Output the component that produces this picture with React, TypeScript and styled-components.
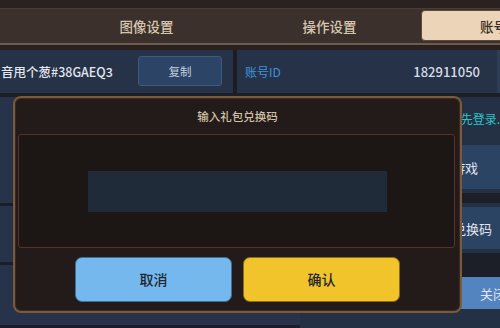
import styled, { createGlobalStyle } from "styled-components";

const GlobalStyle = createGlobalStyle`
    html, body {
        margin: 0;
        padding: 0;
        background: #243044;
    }
    body {
        font-family: "Noto Sans CJK SC", "Noto Sans", sans-serif;
    }
`;

const Screen = styled.div`
    position: relative;
    width: 500px;
    height: 328px;
    overflow: hidden;
    background: #243044;
    display: flex;
    flex-direction: column;
`;

const TopStrip = styled.div`
    height: 8px;
    background: #2a2220;
`;

const TabBar = styled.div`
    height: 34px;
    display: flex;
    align-items: center;
    padding-left: 55px;
    background: #3b302b;
    border-top: 1px solid #4a3c35;
    border-bottom: 2px solid #6b5b50;
`;

const Tab = styled.div<{ $active?: boolean }>`
    flex: 0 0 183px;
    height: ${(p) => (p.$active ? "31px" : "34px")};
    display: flex;
    align-items: center;
    justify-content: ${(p) => (p.$active ? "flex-start" : "center")};
    padding-left: ${(p) => (p.$active ? "58px" : "0")};
    box-sizing: border-box;
    font-size: 13.5px;
    font-weight: 500;
    color: ${(p) => (p.$active ? "#3a2d25" : "#d6c5ae")};
    background: ${(p) => (p.$active ? "#ecd4b8" : "transparent")};
    border: ${(p) => (p.$active ? "1px solid #5a4a3e" : "none")};
    border-radius: 4px;
`;

const TabShadow = styled.div`
    height: 5px;
    background: #2a201d;
`;

const InfoRow = styled.div`
    height: 44px;
    display: flex;
    border-bottom: 4px solid #1c1f27;
`;

const Cell = styled.div<{ $w: number }>`
    flex: 0 0 ${(p) => p.$w}px;
    display: flex;
    align-items: center;
    box-sizing: border-box;
    background: #253247;
`;

const NameText = styled.span`
    flex: 1;
    padding-left: 1px;
    font-size: 12.5px;
    font-weight: 500;
    color: #e3e7ee;
    white-space: nowrap;
`;

const CopyButton = styled.div`
    width: 84px;
    height: 30px;
    margin-right: 11px;
    display: flex;
    align-items: center;
    justify-content: center;
    font-size: 11.5px;
    color: #c4cfdc;
    background: #2c4566;
    border: 1px solid #3c5a7e;
    border-radius: 3px;
    box-sizing: border-box;
`;

const Divider = styled.div`
    flex: 0 0 4px;
    background: #1a1d24;
`;

const IdLabel = styled.span`
    flex: 1;
    padding-left: 8px;
    font-size: 12px;
    color: #3d93dc;
`;

const IdValue = styled.span`
    padding-right: 17px;
    font-size: 13px;
    font-weight: 500;
    color: #d6dce5;
`;

const EdgeStrip = styled.div`
    flex: 1;
    background: #2f3d54;
`;

const Body = styled.div`
    flex: 1;
    display: flex;
`;

const LeftColumn = styled.div`
    flex: 0 0 300px;
    display: flex;
    flex-direction: column;
`;

const LeftBlock = styled.div<{ $h: number }>`
    height: ${(p) => p.$h}px;
    background: #26334a;
    border-bottom: 3px solid #1b1e26;
`;

const RightColumn = styled.div`
    flex: 1;
    display: flex;
    flex-direction: column;
`;

const Notice = styled.div`
    height: 42px;
    display: flex;
    align-items: center;
    justify-content: flex-end;
    padding-right: 0;
    font-size: 12px;
    color: #2fc2c4;
    white-space: nowrap;
`;

const SideButton = styled.div<{ $h: number; $bg: string; $pad: string; $gap: number }>`
    height: ${(p) => p.$h}px;
    margin-top: ${(p) => p.$gap}px;
    display: flex;
    align-items: center;
    justify-content: flex-end;
    padding: ${(p) => p.$pad};
    font-size: 13px;
    color: #e1e7ef;
    background: ${(p) => p.$bg};
    white-space: nowrap;
    overflow: hidden;
`;

const Sep = styled.div<{ $h: number }>`
    height: ${(p) => p.$h}px;
    margin-top: 4px;
    background: #1c1f27;
`;

const Modal = styled.div`
    position: absolute;
    left: 13px;
    top: 96px;
    width: 449px;
    height: 217px;
    box-sizing: border-box;
    display: flex;
    flex-direction: column;
    background: #221b1a;
    border: 2px solid #7a5a38;
    border-radius: 8px;
    box-shadow: inset 0 0 0 1px #3a2a22;
`;

const ModalTitle = styled.div`
    height: 36px;
    display: flex;
    align-items: center;
    justify-content: center;
    font-size: 11.5px;
    font-weight: 500;
    color: #d2c0a8;
`;

const InputBox = styled.div`
    height: 112px;
    margin: 0 5px 0 3px;
    display: flex;
    align-items: center;
    justify-content: center;
    background: #1c1615;
    border: 1px solid #5a3028;
    border-radius: 3px;
`;

const CodeInput = styled.div`
    width: 299px;
    height: 41px;
    margin-left: 1px;
    background: #1f2b39;
`;

const ButtonRow = styled.div`
    flex: 1;
    display: flex;
    align-items: center;
    justify-content: center;
    gap: 11px;
    padding-bottom: 1px;
`;

const ActionButton = styled.div<{ $bg: string; $edge: string }>`
    width: 157px;
    height: 45px;
    box-sizing: border-box;
    display: flex;
    align-items: center;
    justify-content: center;
    font-size: 14px;
    font-weight: 500;
    color: #1e2630;
    background: ${(p) => p.$bg};
    border: 1px solid ${(p) => p.$edge};
    border-radius: 7px;
`;

function App() {
    return (
        <>
            <GlobalStyle />
            <Screen>
                <TopStrip />
                <TabBar>
                    <Tab>图像设置</Tab>
                    <Tab>操作设置</Tab>
                    <Tab $active>账号设置</Tab>
                </TabBar>
                <TabShadow />
                <InfoRow>
                    <Cell $w={233}>
                        <NameText>音甩个葱#38GAEQ3</NameText>
                        <CopyButton>复制</CopyButton>
                    </Cell>
                    <Divider />
                    <Cell $w={260}>
                        <IdLabel>账号ID</IdLabel>
                        <IdValue>182911050</IdValue>
                    </Cell>
                    <EdgeStrip />
                </InfoRow>
                <Body>
                    <LeftColumn>
                        <LeftBlock $h={106} />
                        <LeftBlock $h={56} />
                        <LeftBlock $h={60} />
                    </LeftColumn>
                    <RightColumn>
                        <Notice>请先登录.</Notice>
                        <SideButton $h={44} $gap={6} $bg="#2b4464" $pad="0 22px 0 0">
                            进入游戏
                        </SideButton>
                        <Sep $h={10} />
                        <SideButton $h={42} $gap={4} $bg="#2b4464" $pad="0 8px 0 0">
                            礼包兑换码
                        </SideButton>
                        <Sep $h={24} />
                        <SideButton $h={32} $gap={0} $bg="#5384bf" $pad="0 0 0 0">
                            <span style={{ width: 20, overflow: "hidden" }}>关闭</span>
                        </SideButton>
                    </RightColumn>
                </Body>
                <Modal>
                    <ModalTitle>输入礼包兑换码</ModalTitle>
                    <InputBox>
                        <CodeInput />
                    </InputBox>
                    <ButtonRow>
                        <ActionButton $bg="#74b8ee" $edge="#3f6f98">
                            取消
                        </ActionButton>
                        <ActionButton $bg="#f2c42c" $edge="#8e6c12">
                            确认
                        </ActionButton>
                    </ButtonRow>
                </Modal>
            </Screen>
        </>
    );
}

export default App;
